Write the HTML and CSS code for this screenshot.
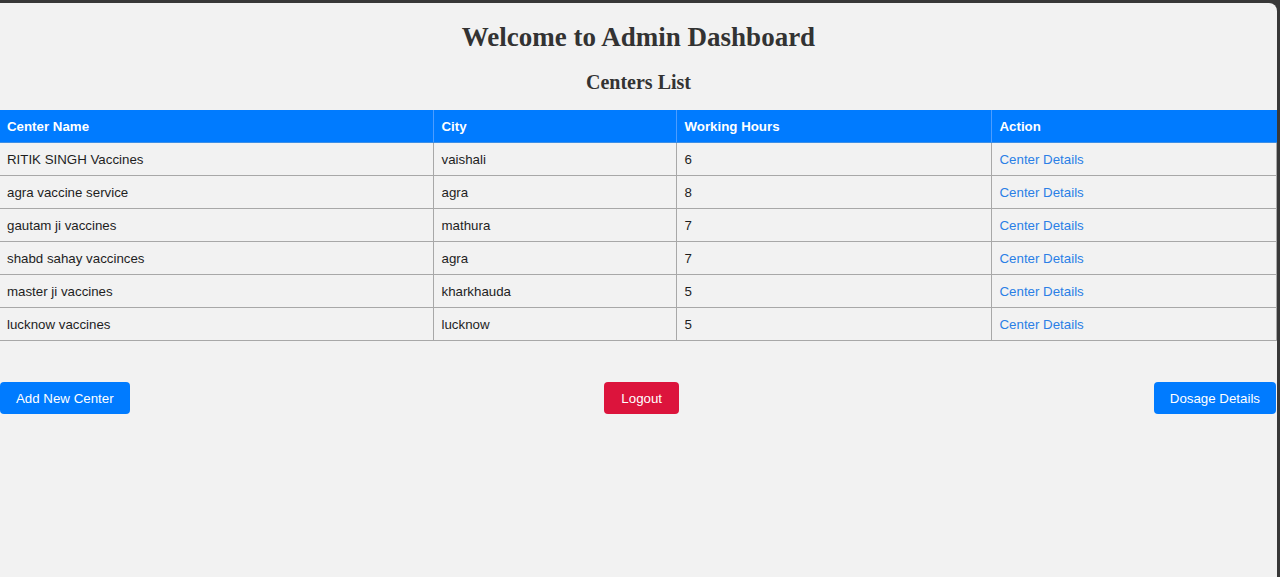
FILE: index.html
```html
<!DOCTYPE html>
<html lang="en">
<head>
<meta charset="utf-8">
<title>Admin Dashboard</title>
<link rel="stylesheet" href="styles.css">
</head>
<body>
<div class="page">
  <h1 class="title">Welcome to Admin Dashboard</h1>
  <h2 class="subtitle">Centers List</h2>
  <table class="centers">
    <colgroup>
      <col class="c-name">
      <col class="c-city">
      <col class="c-hours">
      <col class="c-action">
    </colgroup>
    <thead>
      <tr><th>Center Name</th><th>City</th><th>Working Hours</th><th>Action</th></tr>
    </thead>
    <tbody>
      <tr><td>RITIK SINGH Vaccines</td><td>vaishali</td><td>6</td><td><a href="#">Center Details</a></td></tr>
      <tr><td>agra vaccine service</td><td>agra</td><td>8</td><td><a href="#">Center Details</a></td></tr>
      <tr><td>gautam ji vaccines</td><td>mathura</td><td>7</td><td><a href="#">Center Details</a></td></tr>
      <tr><td>shabd sahay vaccinces</td><td>agra</td><td>7</td><td><a href="#">Center Details</a></td></tr>
      <tr><td>master ji vaccines</td><td>kharkhauda</td><td>5</td><td><a href="#">Center Details</a></td></tr>
      <tr><td>lucknow vaccines</td><td>lucknow</td><td>5</td><td><a href="#">Center Details</a></td></tr>
    </tbody>
  </table>
  <div class="actions">
    <button class="btn btn-blue">Add New Center</button>
    <button class="btn btn-red">Logout</button>
    <button class="btn btn-blue">Dosage Details</button>
  </div>
</div>
</body>
</html>
```
FILE: styles.css
```css
html {
  background: #383838;
  height: 100%;
}
body {
  margin: 0;
  font-family: "Liberation Sans", Arial, sans-serif;
  font-size: 13.3px;
  color: #1e1e1e;
}
.page {
  margin: 3px 3px 0 0;
  background: #f2f2f2;
  border-top-right-radius: 8px;
  min-height: 574px;
  overflow: hidden;
}
.title {
  font-family: "Liberation Serif", "Times New Roman", serif;
  font-size: 27px;
  line-height: 32px;
  font-weight: bold;
  color: #333;
  text-align: center;
  margin: 18px 0 0;
}
.subtitle {
  font-family: "Liberation Serif", "Times New Roman", serif;
  font-size: 20px;
  line-height: 24px;
  font-weight: bold;
  color: #333;
  text-align: center;
  margin: 17px 0 16px;
}
.centers {
  width: 1276px;
  border-collapse: collapse;
  table-layout: fixed;
}
.c-name { width: 433px; }
.c-city { width: 243px; }
.c-hours { width: 315px; }
.c-action { width: 285px; }
.centers th,
.centers td {
  height: 32px;
  padding: 0 8px;
  text-align: left;
  border-right: 1px solid #a8a8a8;
  border-bottom: 1px solid #a8a8a8;
}
.centers th:first-child,
.centers td:first-child {
  padding-left: 7px;
}
.centers th {
  background: #007bff;
  color: #fff;
  font-weight: bold;
  border-right-color: #4d9dff;
  border-bottom-color: #3d8fe6;
}
.centers th:last-child {
  border-right-color: #007bff;
}
.centers a {
  color: #2a7fe6;
  text-decoration: none;
}
.actions {
  display: flex;
  justify-content: space-between;
  width: 1276px;
  margin-top: 41px;
}
.btn {
  font-family: "Liberation Sans", Arial, sans-serif;
  font-size: 13.3px;
  color: #fff;
  border: none;
  border-radius: 4px;
  height: 32px;
  padding: 0 16px;
}
.btn-blue {
  background: #007bff;
}
.btn-red {
  background: #dc143c;
  padding: 0 17px;
}
```
